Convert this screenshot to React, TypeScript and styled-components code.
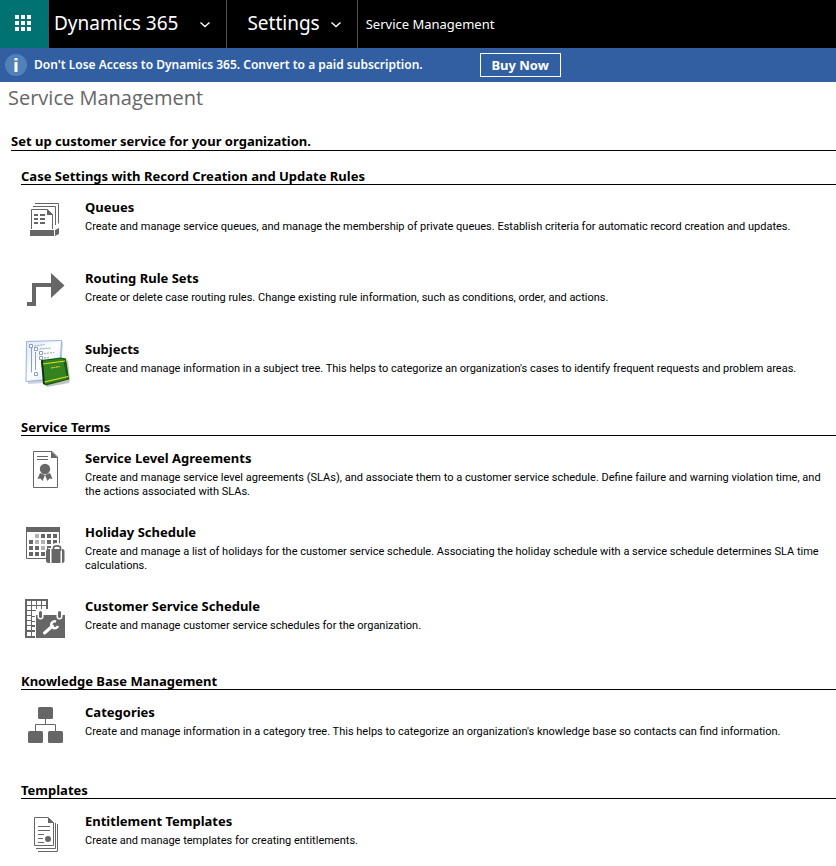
import React from "react";
import styled, { createGlobalStyle } from "styled-components";

const GlobalStyle = createGlobalStyle`
  * { box-sizing: border-box; }
  body {
    margin: 0;
    background: #fff;
    color: #000;
    font-family: "Segoe UI", "Noto Sans", "Open Sans", sans-serif;
    overflow-x: hidden;
  }
  button { font-family: inherit; cursor: pointer; }
`;

const TopBar = styled.header`
  display: flex;
  height: 48px;
  background: #000;
  color: #fff;
`;

const AppLauncher = styled.button`
  display: flex;
  align-items: center;
  justify-content: center;
  width: 49px;
  padding: 0 3px 2px 0;
  border: 0;
  border-right: 1px solid #505050;
  background: #007272;
`;

const NavButton = styled.button<{ $inset: number; $gap: number }>`
  display: flex;
  align-items: center;
  gap: ${(p) => p.$gap}px;
  padding: 0 15px 2px ${(p) => p.$inset}px;
  border: 0;
  border-right: 1px solid #505050;
  background: transparent;
  color: #fff;
  font-size: 19px;
  line-height: 26px;
`;

const Crumb = styled.a`
  display: flex;
  align-items: center;
  padding-left: 8px;
  color: #fff;
  font-size: 13px;
  text-decoration: none;
`;

const Notice = styled.div`
  display: flex;
  align-items: center;
  height: 34px;
  padding-left: 5px;
  background: #315fa2;
  color: #fff;
  font-size: 12px;
  font-weight: 600;
`;

const NoticeText = styled.span`
  margin: 0 57px 0 7px;
  padding-bottom: 2px;
  white-space: nowrap;
`;

const BuyButton = styled.button`
  width: 81px;
  height: 24px;
  padding: 0;
  border: 1px solid #fff;
  background: transparent;
  color: #fff;
  font-size: 13px;
  font-weight: 700;
  line-height: 20px;
`;

const PageTitle = styled.h1`
  margin: 0;
  padding: 1px 8px 0;
  color: #666;
  font-family: "Segoe UI", "Open Sans", sans-serif;
  font-size: 20px;
  font-weight: 400;
  line-height: 30px;
`;

const Content = styled.main`
  padding: 19px 0 0 11px;
`;

const Intro = styled.h2`
  margin: 0;
  border-bottom: 1px solid #000;
  font-size: 13px;
  font-weight: 700;
  line-height: 18px;
`;

const Section = styled.section`
  padding-left: 10px;
`;

const SectionTitle = styled.h3<{ $first: boolean }>`
  margin: 0 0 13px;
  padding-top: ${(p) => (p.$first ? 17 : 8)}px;
  border-bottom: 1px solid #000;
  font-size: 13px;
  font-weight: 700;
  line-height: 16px;
`;

const Item = styled.a`
  display: flex;
  align-items: flex-start;
  gap: 16px;
  padding: 0 10px 23px 0;
  color: inherit;
  text-decoration: none;
`;

const ItemIcon = styled.svg`
  flex: none;
  overflow: visible;
`;

const ItemText = styled.div`
  flex: 1;
  min-width: 0;
`;

const ItemTitle = styled.h4`
  margin: 0;
  font-size: 13px;
  font-weight: 700;
  line-height: 18px;
`;

const ItemDescription = styled.p`
  margin: 0;
  padding: 4px 0 1px;
  font-family: "Segoe UI", Roboto, sans-serif;
  font-size: 11px;
  line-height: 14px;
`;

const GREY = "#666";

const Chevron = () => (
  <svg width="12" height="12" viewBox="0 0 12 12" aria-hidden="true">
    <path d="M1.5 5.5 6 9.5l4.5-4" fill="none" stroke="#fff" strokeWidth="1.4" />
  </svg>
);

const QueuesArt = () => (
  <g fill="none" stroke={GREY}>
    <path d="M20 8.5h23.500v20M18 11.500h22.500v18.500M16.500 34V14.500h16l5 5V34" />
    <path d="M32 14v6h6z" fill={GREY} stroke="none" />
    <path d="M19 20h4M25 20h5M19 24h4M25 24h5M19 28h4M25 28h5" strokeWidth="2" />
    <path d="M15 35h24v6H15zM40 35l4-2v6l-4 2z" fill={GREY} stroke="none" />
  </g>
);

const RoutingArt = () => (
  <path d="M12 40h5V21h19V11l13.500 12.500L36 36V25H21v19h-9z" fill={GREY} />
);

const SubjectsArt = () => (
  <g>
    <path d="M13 11.500 48 10l-3 40-32 2z" fill="#a5afbd" opacity=".55" />
    <path d="M11.500 9.500 46.500 8.500l-2 38-33.500 3z" fill="url(#paper)" stroke="#7da2d5" strokeWidth=".8" />
    <g fill="none" stroke="#7788a0" strokeWidth=".8">
      <path d="M16.500 16v24.500M20.500 20v18M20 17.500h2M24 21h2" />
      <path d="M14.500 12.500h3v3h-3zM19.500 15.500h3v3h-3zM24.500 19.500h3v3h-3zM24.500 24.500h3v3h-3zM19.500 40.500h3v3h-3z" fill="#fff" />
      <path d="M19.500 14l10-1.500M24.500 17l12-1M29 21.500l10-1M29 26l5-.5" strokeDasharray="2 1" />
    </g>
    <path d="m30 53 2 2 22-4 1-3-2-20z" fill="#555" opacity=".35" />
    <path d="m26 28 20-2.500 5 1 3 21-23 6-2-2z" fill="#175b13" />
    <path d="m27 29 21-2.500 4 20.500-22 5z" fill="#338420" />
    <path d="m26 29 2-1 2 25-2-1z" fill="#0c380b" />
    <path d="m28 32 22-3M29.500 50 53 44.500" stroke="#e3df23" strokeWidth="1.200" />
    <path d="m36 36 9-1.500" stroke="#d3cf35" strokeWidth="1.200" strokeDasharray="2 .5" />
    <defs>
      <linearGradient id="paper" x2="1" y2="1">
        <stop stopColor="#dce8fb" />
        <stop offset=".5" stopColor="#fff" />
        <stop offset="1" stopColor="#bdd4f5" />
      </linearGradient>
    </defs>
  </g>
);

const AgreementArt = () => (
  <g fill={GREY}>
    <path d="M18.500 9.500H37l5.500 5.500v30.500h-24z" fill="none" stroke={GREY} />
    <path d="M36 9v7h7z" />
    <path d="M22 14h11v1H22zM22 17h11v1H22z" />
    <circle cx="30" cy="27" r="5.200" />
    <path d="m25 31-2.500 6 3-.5 2 2.500 2.500-6 2.500 6 2-2.500 3 .5-2.500-6-5 2z" />
  </g>
);

const HolidayArt = () => (
  <g fill={GREY}>
    <path d="M11 12h34v5H11z" />
    <path d="M11.500 16v27.500h20M44.500 16v14" fill="none" stroke={GREY} />
    <path d="M26 19h4v4h-4zM32 19h4v4h-4zM38 19h4v4h-4zM14 25h4v4h-4zM32 25h4v4h-4zM38 25h4v4h-4zM14 31h4v4h-4zM20 31h4v4h-4zM32 31h4v4h-4zM14 37h4v4h-4zM20 37h4v4h-4zM26 37h4v4h-4z" />
    <path d="M20 19h4v4h-4zM20 25h4v4h-4zM26 25h4v4h-4zM26 31h4v4h-4z" fill="#b3b3b3" />
    <path d="M33 33h3q0-5 6-5t6 5h3v12H33z" fill="#fff" />
    <path d="M38.500 36v-3q0-2.200 3.500-2.200t3.500 2.200v3" fill="none" stroke={GREY} strokeWidth="1.800" />
    <path d="M33.500 34H35v14h-1.500q-2.500 0-2.500-2V36q0-2 2.500-2zM36.500 34h9v14h-9zM47 34q2.500 0 2.500 2v10q0 2-2.500 2z" />
  </g>
);

const gridRows = [11, 16, 21, 26, 31, 36, 42];
const gridColumns = [12, 17, 22, 27];

const ScheduleArt = () => (
  <g fill={GREY}>
    <path d="M10 9h23v39H10z" />
    {gridRows.map((y) =>
      gridColumns.map((x) => <rect key={`${x}-${y}`} x={x} y={y} width="4" height="4" fill="#fff" />),
    )}
    <path d="M17 23h4v-4h13v30H20V31h-3z" fill="#fff" />
    <path d="M17 26h3v1h-3zM17 31h3v1h-3zM17 36h3v1h-3z" />
    <path d="M21 25h29v23H21z" />
    <rect x="22.500" y="19.500" width="6" height="10" rx="3" fill="#fff" />
    <rect x="41.500" y="19.500" width="6" height="10" rx="3" fill="#fff" />
    <rect x="24" y="21" width="3" height="7" rx="1.500" />
    <rect x="43" y="21" width="3" height="7" rx="1.500" />
    <path d="m29.500 43 8-7" stroke="#fff" strokeWidth="3" strokeLinecap="round" />
    <path d="M41 31.500a3.500 3.500 0 1 0 2 4.500" fill="none" stroke="#fff" strokeWidth="2.500" />
  </g>
);

const CategoriesArt = () => (
  <g fill={GREY}>
    <path d="M30.500 22v6M20.500 35v-6.500h20V35" fill="none" stroke={GREY} />
    <rect x="23" y="11" width="15" height="12" rx="1.500" />
    <rect x="13" y="35" width="15" height="12" rx="1.500" />
    <rect x="33" y="35" width="15" height="12" rx="1.500" />
  </g>
);

const EntitlementArt = () => (
  <g fill={GREY}>
    <path d="M19.500 11.500H33l5.500 5.500v22.500h-19zM40.500 17v25.500H21M42.500 18v27.500H23" fill="none" stroke={GREY} />
    <path d="M33 11v6h6z" />
    <path d="M23 20.500h12M23 24.500h12M23 28.500h6M23 32.500h5M23 36.500h6" fill="none" stroke={GREY} />
    <circle cx="33" cy="33" r="3" />
  </g>
);

type Entry = {
  title: string;
  text: string;
  Art: () => React.JSX.Element;
  top: number;
  height?: number;
};

const sections: { title: string; entries: Entry[] }[] = [
  {
    title: "Case Settings with Record Creation and Update Rules",
    entries: [
      {
        title: "Queues",
        text: "Create and manage service queues, and manage the membership of private queues. Establish criteria for automatic record creation and updates.",
        Art: QueuesArt,
        top: 3,
      },
      {
        title: "Routing Rule Sets",
        text: "Create or delete case routing rules. Change existing rule information, such as conditions, order, and actions.",
        Art: RoutingArt,
        top: 7,
      },
      {
        title: "Subjects",
        text: "Create and manage information in a subject tree. This helps to categorize an organization's cases to identify frequent requests and problem areas.",
        Art: SubjectsArt,
        top: 8,
      },
    ],
  },
  {
    title: "Service Terms",
    entries: [
      {
        title: "Service Level Agreements",
        text: "Create and manage service level agreements (SLAs), and associate them to a customer service schedule. Define failure and warning violation time, and the actions associated with SLAs.",
        Art: AgreementArt,
        top: 7,
      },
      {
        title: "Holiday Schedule",
        text: "Create and manage a list of holidays for the customer service schedule. Associating the holiday schedule with a service schedule determines SLA time calculations.",
        Art: HolidayArt,
        top: 8,
      },
      {
        title: "Customer Service Schedule",
        text: "Create and manage customer service schedules for the organization.",
        Art: ScheduleArt,
        top: 7,
        height: 45,
      },
    ],
  },
  {
    title: "Knowledge Base Management",
    entries: [
      {
        title: "Categories",
        text: "Create and manage information in a category tree. This helps to categorize an organization's knowledge base so contacts can find information.",
        Art: CategoriesArt,
        top: 7,
      },
    ],
  },
  {
    title: "Templates",
    entries: [
      {
        title: "Entitlement Templates",
        text: "Create and manage templates for creating entitlements.",
        Art: EntitlementArt,
        top: 6,
      },
    ],
  },
];

const dots = [0, 6, 12];

export default function App() {
  return (
    <>
      <GlobalStyle />
      <TopBar>
        <AppLauncher aria-label="App launcher">
          <svg width="16" height="16" viewBox="0 0 16 16" fill="#fff" aria-hidden="true">
            {dots.map((y) => dots.map((x) => <rect key={`${x}-${y}`} x={x} y={y} width="4" height="4" />))}
          </svg>
        </AppLauncher>
        <NavButton $inset={5} $gap={21}>
          Dynamics 365
          <Chevron />
        </NavButton>
        <NavButton $inset={20} $gap={10}>
          Settings
          <Chevron />
        </NavButton>
        <Crumb href="#service-management">Service Management</Crumb>
      </TopBar>
      <Notice role="status">
        <svg width="22" height="22" viewBox="0 0 22 22" aria-hidden="true">
          <circle cx="11" cy="11" r="11" fill="#5082b8" />
          <path d="M9.500 4h3v2.500h-3zM9.500 8h3v10h-3z" fill="#fff" />
        </svg>
        <NoticeText>Don't Lose Access to Dynamics 365. Convert to a paid subscription.</NoticeText>
        <BuyButton>Buy Now</BuyButton>
      </Notice>
      <PageTitle>Service Management</PageTitle>
      <Content>
        <Intro>Set up customer service for your organization.</Intro>
        {sections.map((section, i) => (
          <Section key={section.title}>
            <SectionTitle $first={i === 0}>{section.title}</SectionTitle>
            {section.entries.map(({ title, text, Art, top, height = 48 }) => (
              <Item key={title} href="#">
                <ItemIcon width="48" height={height} viewBox={`6 ${top} 48 ${height}`} aria-hidden="true">
                  <Art />
                </ItemIcon>
                <ItemText>
                  <ItemTitle>{title}</ItemTitle>
                  <ItemDescription>{text}</ItemDescription>
                </ItemText>
              </Item>
            ))}
          </Section>
        ))}
      </Content>
    </>
  );
}
